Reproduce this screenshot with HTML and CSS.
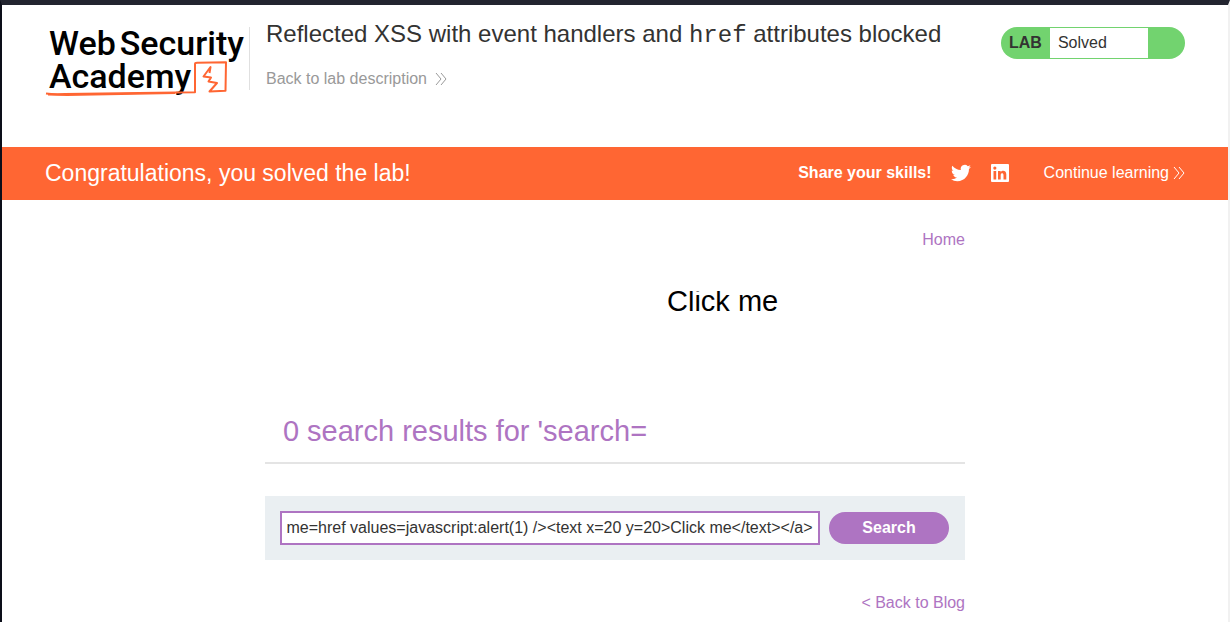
FILE: index.html
```html
<!DOCTYPE html>
<html lang="en">
<head>
<meta charset="utf-8">
<title>Reflected XSS with event handlers and href attributes blocked</title>
<link rel="stylesheet" href="styles.css">
</head>
<body>
<header class="lab-header">
  <div class="container header-row">
    <a class="logo" href="#" aria-label="Web Security Academy">
      <span class="logo-line"><span>Web</span><span>Security</span></span>
      <span class="logo-line">Academy</span>
      <svg class="logo-mark" viewBox="0 0 184 38" aria-hidden="true">
        <path d="M1 33.500 Q8 34.500 20 34 L150 32.200 L150 4 Q150 2.800 152 2.800 L181 2.200 L180.500 30.800 L164.500 31.500 L172 23 L163.500 21.500 L166 17.500 L158.500 16.500 L165.500 7 L164.500 13" />
        <path d="M3 34.500 L22 35 L130 33" />
      </svg>
    </a>
    <div class="title-block">
      <h2>Reflected XSS with event handlers and <code>href</code> attributes blocked</h2>
      <a class="back-link" href="#">Back to lab description
        <svg class="chevrons" viewBox="0 0 12 12" aria-hidden="true"><path d="M1 0l5 6-5 6M6 0l5 6-5 6"/></svg>
      </a>
    </div>
    <div class="lab-status"><strong>LAB</strong><span>Solved</span></div>
  </div>
</header>
<section class="banner">
  <div class="container banner-row">
    <h4>Congratulations, you solved the lab!</h4>
    <div class="share">
      <strong>Share your skills!</strong>
      <a href="#" aria-label="Twitter"><svg class="social" viewBox="0 0 24 24" aria-hidden="true"><path d="M23.95 4.57a10 10 0 0 1-2.82.77 4.96 4.96 0 0 0 2.16-2.72c-.95.55-2 .95-3.13 1.18a4.92 4.92 0 0 0-8.38 4.48C7.69 8.1 4.07 6.13 1.64 3.16a4.82 4.82 0 0 0-.67 2.48c0 1.71.87 3.21 2.19 4.1a4.9 4.9 0 0 1-2.23-.62v.06a4.92 4.92 0 0 0 3.95 4.83 5 5 0 0 1-2.21.08 4.94 4.94 0 0 0 4.6 3.42A9.87 9.87 0 0 1 0 19.54a14 14 0 0 0 7.55 2.21c9.05 0 14-7.5 14-13.99 0-.21 0-.42-.02-.63a9.94 9.94 0 0 0 2.42-2.56z"/></svg></a>
      <a href="#" aria-label="LinkedIn"><svg class="social" viewBox="0 0 20 20" aria-hidden="true"><path fill-rule="evenodd" d="M2 1h16a1 1 0 0 1 1 1v16a1 1 0 0 1-1 1H2a1 1 0 0 1-1-1V2a1 1 0 0 1 1-1zM3.500 8v8.500h2.700V8zM4.850 3.500a1.600 1.600 0 1 0 0 3.200 1.600 1.600 0 0 0 0-3.200zM8 8v8.500h2.700V12c0-2.200 2.800-2.200 2.800 0v4.500h2.800v-5.300c0-3.900-4.200-4.300-5.600-2V8z"/></svg></a>
    </div>
    <a class="continue" href="#">Continue learning
      <svg class="chevrons" viewBox="0 0 12 12" aria-hidden="true"><path d="M1 0l5 6-5 6M6 0l5 6-5 6"/></svg>
    </a>
  </div>
</section>
<main class="content">
  <nav class="align-end"><a href="#">Home</a></nav>
  <h1>0 search results for 'search=<svg class="payload" width="300" height="150"><a><text x="20" y="20">Click me</text></a></svg></h1>
  <form class="search">
    <input id="term" type="text" aria-label="Search the blog" value="search=&lt;svg&gt;&lt;a&gt;&lt;animate attributeName=href values=javascript:alert(1) /&gt;&lt;text x=20 y=20&gt;Click me&lt;/text&gt;&lt;/a&gt;">
    <button type="button">Search</button>
  </form>
  <div class="align-end"><a href="#">&lt; Back to Blog</a></div>
</main>
<script src="script.js"></script>
</body>
</html>
```
FILE: styles.css
```css
* { box-sizing: border-box; }
html { background: #fff; }
body {
  margin: 0;
  min-height: 100vh;
  border-top: 5px solid #22242f;
  border-left: 2px solid #0c0e19;
  border-right: 2px solid #f1f1f1;
  font: 16px/20px "Liberation Sans", Arial, sans-serif;
  color: #333332;
  overflow: hidden;
}
h1, h2, h4 { margin: 0; font-weight: normal; }
a { color: #ae74c2; text-decoration: none; }
.container { max-width: 1140px; margin: 0 auto; }

.header-row { display: flex; align-items: flex-start; padding-top: 22px; min-height: 142px; }
.logo {
  position: relative;
  width: 205px;
  height: 63px;
  padding-left: 4px;
  border-right: 1px solid #e0e0e0;
  color: #000;
  font: 500 34px/33px Roboto, sans-serif;
}
.logo-line { display: flex; gap: 4px; }
.logo-mark { position: absolute; left: 0; top: 33px; width: 184px; height: 38px; }
.logo-mark path { fill: none; stroke: #ff6633; stroke-width: 2; stroke-linejoin: round; }
.title-block { flex: 1; padding-left: 16px; }
h2 { font-size: 24px; line-height: 28px; margin-top: -7px; }
h2 code { font: 24px "Liberation Mono", monospace; }
.back-link { display: inline-flex; align-items: center; gap: 8px; margin-top: 20px; color: #999; }
.chevrons { width: 12px; height: 12px; fill: none; stroke: currentColor; stroke-width: 1; }
.lab-status {
  display: flex;
  width: 184px;
  height: 32px;
  padding: 1px 37px 1px 8px;
  border-radius: 16px;
  background: #72d36f;
  line-height: 30px;
}
.lab-status strong { padding-right: 8px; }
.lab-status span { flex: 1; padding-left: 8px; background: #fff; }

.banner { background: #ff6633; color: #fff; }
.banner a { color: #fff; }
.banner-row { display: flex; align-items: center; height: 53px; padding-bottom: 2px; }
h4 { flex: 1; font-size: 23px; line-height: 28px; }
.share { display: flex; align-items: center; gap: 19px; }
.share a { display: flex; }
.social { width: 20px; height: 20px; fill: #fff; }
.continue { display: flex; align-items: center; gap: 4px; margin-left: 34px; }

.content { max-width: 700px; margin: 0 auto; padding-top: 30px; }
.align-end { text-align: right; }
h1 {
  padding-bottom: 15px;
  margin-top: 41px;
  border-bottom: 2px solid #e4e4e4;
  color: #ae74c2;
  font-size: 29px;
  line-height: 32px;
  text-align: center;
}
.payload { overflow: hidden; fill: #000; }
.search { display: flex; align-items: center; gap: 9px; margin: 32px 0 33px; padding: 15px 16px 15px 15px; background: #eaeff2; }
.search input {
  flex: 1;
  height: 34px;
  padding: 0 5px;
  border: 2px solid #ae74c2;
  color: #333332;
  background: #fff;
  font: inherit;
}
.search button {
  width: 120px;
  height: 32px;
  border: 0;
  border-radius: 16px;
  background: #ae74c2;
  color: #fff;
  font: bold 16px/20px "Liberation Sans", Arial, sans-serif;
}
```
FILE: script.js
```js
const term = document.getElementById("term");
term.scrollLeft = term.scrollWidth;
```
